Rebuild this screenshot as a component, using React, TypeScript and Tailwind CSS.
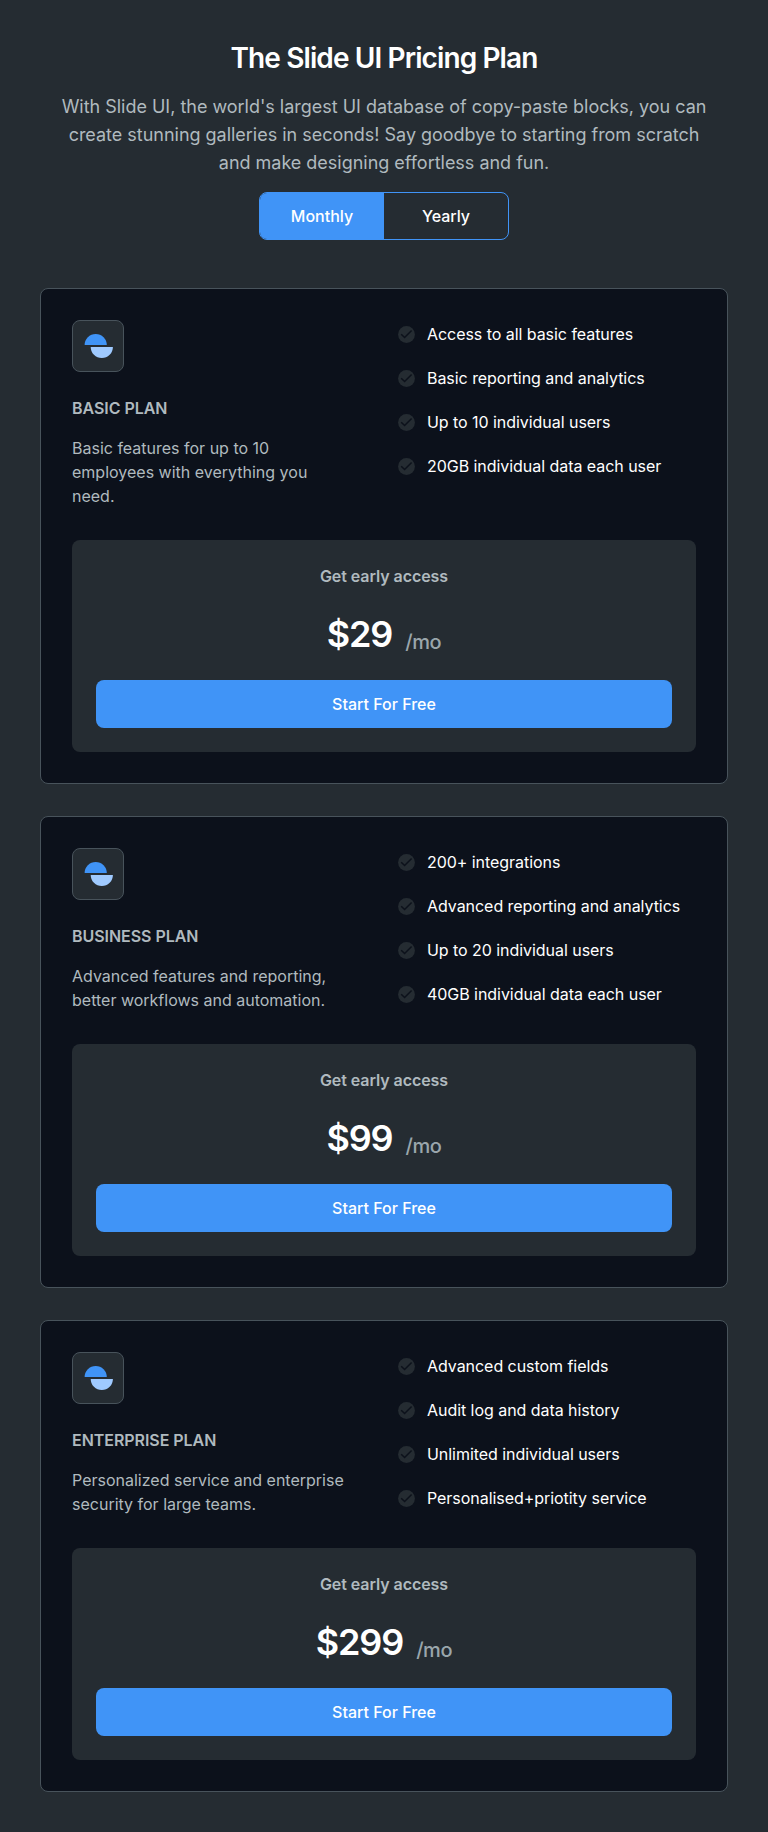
import React from "react";

type Plan = { name: string; description: string; price: string; features: string[] };

const plans: Plan[] = [
  {
    name: "BASIC PLAN",
    description: "Basic features for up to 10 employees with everything you need.",
    price: "$29",
    features: [
      "Access to all basic features",
      "Basic reporting and analytics",
      "Up to 10 individual users",
      "20GB individual data each user",
    ],
  },
  {
    name: "BUSINESS PLAN",
    description: "Advanced features and reporting, better workflows and automation.",
    price: "$99",
    features: [
      "200+ integrations",
      "Advanced reporting and analytics",
      "Up to 20 individual users",
      "40GB individual data each user",
    ],
  },
  {
    name: "ENTERPRISE PLAN",
    description: "Personalized service and enterprise security for large teams.",
    price: "$299",
    features: [
      "Advanced custom fields",
      "Audit log and data history",
      "Unlimited individual users",
      "Personalised+priotity service",
    ],
  },
];

function PlanIcon() {
  return (
    <div className="flex size-13 items-center justify-center rounded-lg border border-[#48535b] bg-[#252c32]">
      <svg width="30" height="26" viewBox="0 0 30 26">
        <path d="M1.6 12a11.1 11.1 0 0 1 22.2 0z" fill="#4094f7" />
        <path d="M7.7 14h22.2a11.1 11.1 0 0 1-22.2 0z" fill="#9fcaff" />
      </svg>
    </div>
  );
}

function CheckIcon() {
  return (
    <svg width="17" height="17" viewBox="0 0 17 17" className="shrink-0">
      <circle cx="8.5" cy="8.5" r="8.4" fill="#252c32" />
      <path d="M3.2 8.2l3.4 3.3 7-7" fill="none" stroke="#0c111b" strokeWidth="1.6" />
    </svg>
  );
}

function PlanCard({ plan }: { plan: Plan }) {
  return (
    <section className="flex flex-col gap-8 rounded-lg border border-[#48535b] bg-[#0c111b] p-[31px]">
      <div className="flex justify-between">
        <div className="w-[272px]">
          <PlanIcon />
          <h2 className="mt-6 text-base leading-6 font-semibold tracking-[-0.003em] text-[#b0babf]">{plan.name}</h2>
          <p className="mt-4 text-base leading-6 text-[#b0babf]">{plan.description}</p>
        </div>
        <ul className="flex w-[298px] flex-col gap-5 pt-0.5">
          {plan.features.map((feature) => (
            <li
              key={feature}
              className="flex items-center gap-3 text-base leading-6 tracking-[-0.003em] whitespace-nowrap text-white"
            >
              <CheckIcon />
              {feature}
            </li>
          ))}
        </ul>
      </div>
      <div className="flex h-[212px] flex-col items-center rounded-lg bg-[#252c32] p-6">
        <p className="text-base leading-6 font-semibold tracking-[-0.004em] text-[#b0babf]">Get early access</p>
        <p className="mt-[22px] flex h-12 items-start gap-[13px]">
          <span className="text-4xl leading-12 font-semibold tracking-[-0.032em] text-white">{plan.price}</span>
          <span className="pt-[18px] text-xl leading-7 font-medium tracking-[-0.02em] text-[#9aa6ac]">/mo</span>
        </p>
        <button className="mt-[22px] h-12 w-full rounded-lg bg-[#4094f7] text-base font-medium text-white">
          Start For Free
        </button>
      </div>
    </section>
  );
}

export default function App() {
  const [yearly, setYearly] = React.useState(false);
  return (
    <main className="min-h-[1832px] bg-[#252c32] p-10 font-['Inter',sans-serif]">
      <header className="flex flex-col items-center text-center">
        <h1 className="text-[28px] leading-9 font-semibold tracking-[-0.032em] text-white">The Slide UI Pricing Plan</h1>
        <p className="mt-[17px] w-[660px] text-lg leading-7 tracking-[-0.001em] text-[#b0babf]">
          With Slide UI, the world's largest UI database of copy-paste blocks, you can create stunning galleries in
          seconds! Say goodbye to starting from scratch and make designing effortless and fun.
        </p>
        <div className="mt-[15px] flex h-12 w-[250px] overflow-hidden rounded-lg border border-[#4094f7] text-base font-medium text-white">
          <button onClick={() => setYearly(false)} className={yearly ? "flex-1" : "flex-1 bg-[#4094f7]"}>
            Monthly
          </button>
          <button onClick={() => setYearly(true)} className={yearly ? "flex-1 bg-[#4094f7]" : "flex-1"}>
            Yearly
          </button>
        </div>
      </header>
      <div className="mt-12 flex flex-col gap-8">
        {plans.map((plan) => (
          <PlanCard key={plan.name} plan={plan} />
        ))}
      </div>
    </main>
  );
}
